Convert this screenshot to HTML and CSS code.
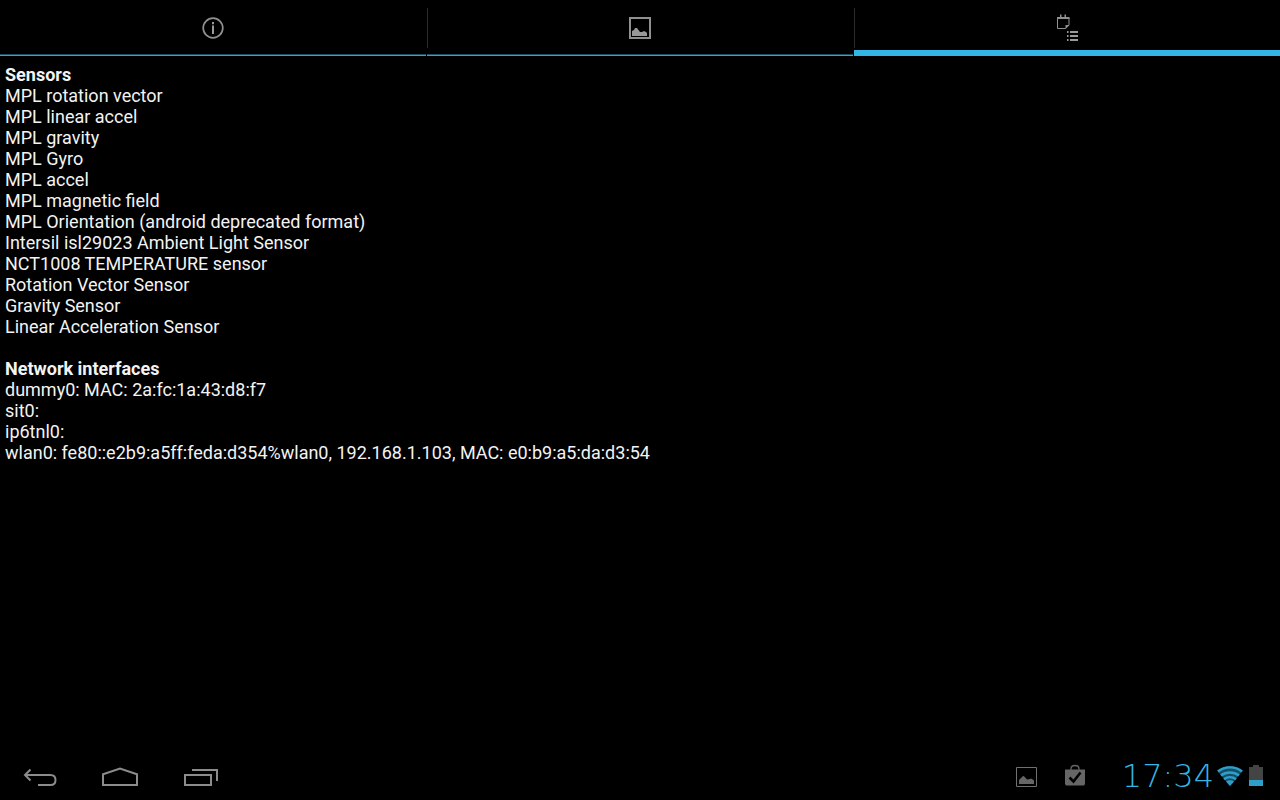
FILE: index.html
```html
<!DOCTYPE html>
<html lang="en">
<head>
<meta charset="utf-8">
<meta name="viewport" content="width=device-width, initial-scale=1">
<title>Device information</title>
<link rel="stylesheet" href="styles.css">
</head>
<body>
<div class="screen">
  <nav class="tabs" role="tablist">
    <button class="tab" type="button" role="tab" aria-selected="false" aria-label="Info">
      <svg class="icon" width="32" height="32" viewBox="0 0 32 32" fill="none">
        <circle cx="16" cy="16" r="9.800" stroke="#909090" stroke-width="1.700"/>
        <path d="M15 10h2v2.200h-2zM15 13.500h2V22h-2z" fill="#999"/>
      </svg>
    </button>
    <button class="tab" type="button" role="tab" aria-selected="false" aria-label="Pictures">
      <svg class="icon" width="32" height="32" viewBox="0 0 32 32" fill="none">
        <path d="M6 6h20v20H6z" stroke="#909090" stroke-width="2"/>
        <path d="M8 24v-5l2-1 1-2h2l1.500 2 1.500 2h2l2-1 2 1 1 1v3z" fill="#999"/>
      </svg>
    </button>
    <button class="tab" type="button" role="tab" aria-selected="true" aria-label="Details">
      <svg class="icon" width="32" height="32" viewBox="0 0 32 32" fill="none">
        <path d="M6 5h12.500v2H6zM9 2.500h1.500V5H9zM13.500 2.500H15V5h-1.500z" fill="#909090"/>
        <path d="M6.500 6v10.500h8L18 13V6" stroke="#909090"/>
        <path d="M14.500 17v-4h4z" fill="#909090"/>
        <path d="M16 19h1.500v2H16zM19 19h8v2h-8zM16 23h1.500v2H16zM19 23h8v2h-8zM16 27h1.500v2H16zM19 27h8v2h-8z" fill="#999"/>
      </svg>
    </button>
  </nav>

  <main class="content">
    <section class="group">
      <h2 class="heading">Sensors</h2>
      <ul class="list">
        <li>MPL rotation vector</li>
        <li>MPL linear accel</li>
        <li>MPL gravity</li>
        <li>MPL Gyro</li>
        <li>MPL accel</li>
        <li>MPL magnetic field</li>
        <li>MPL Orientation (android deprecated format)</li>
        <li>Intersil isl29023 Ambient Light Sensor</li>
        <li>NCT1008 TEMPERATURE sensor</li>
        <li>Rotation Vector Sensor</li>
        <li>Gravity Sensor</li>
        <li>Linear Acceleration Sensor</li>
      </ul>
    </section>
    <section class="group">
      <h2 class="heading">Network interfaces</h2>
      <ul class="list">
        <li>dummy0: MAC: 2a:fc:1a:43:d8:f7</li>
        <li>sit0:</li>
        <li>ip6tnl0:</li>
        <li>wlan0: fe80::e2b9:a5ff:feda:d354%wlan0, 192.168.1.103, MAC: e0:b9:a5:da:d3:54</li>
      </ul>
    </section>
  </main>

  <footer class="system-bar">
    <div class="nav-keys">
      <button class="key" type="button" aria-label="Back">
        <svg class="icon" width="40" height="32" viewBox="0 0 40 32" fill="none" stroke="#8c8c8c" stroke-width="2">
          <path d="M5 15h25.500c3.300 0 5 2.200 5 5s-1.700 5-5 5H18M10.500 9.500 5 15l5.500 5.500"/>
        </svg>
      </button>
      <button class="key" type="button" aria-label="Home">
        <svg class="icon" width="40" height="32" viewBox="0 0 40 32" fill="none" stroke="#8c8c8c" stroke-width="2">
          <path d="M3 25V14.200L20 8.500l17 5.700V25z"/>
        </svg>
      </button>
      <button class="key" type="button" aria-label="Recent apps">
        <svg class="icon" width="40" height="32" viewBox="0 0 40 32" fill="none" stroke="#8c8c8c" stroke-width="2">
          <path d="M5 15h26v10H5zM12 10h25v11"/>
        </svg>
      </button>
    </div>
    <div class="status">
      <button class="notice" type="button" aria-label="Screenshot saved">
        <svg class="icon" width="24" height="24" viewBox="0 0 24 24" fill="none">
          <path d="M1.500 3.500h20v19h-20z" stroke="#707070"/>
          <path d="M4 20v-4l2-2 2-2 1 .3 3 3.200 3-.5 1-.5 1 .5 2 1.500V20z" fill="#666"/>
        </svg>
      </button>
      <button class="notice" type="button" aria-label="Apps updated">
        <svg class="icon" width="24" height="24" viewBox="0 0 24 24" fill="none">
          <path d="M2 5.500h20V20l-1 1.500H3L2 20z" fill="#666"/>
          <path d="M8 6.500V5c0-2.200 1.800-3.500 4-3.500S16 2.800 16 5v1.500" stroke="#666" stroke-width="1.300"/>
          <path d="m6.500 13.500 4 4 7-9" stroke="#000" stroke-width="2.500"/>
        </svg>
      </button>
      <time class="clock" datetime="17:34">17:34</time>
      <svg class="icon" width="28" height="24" viewBox="0 0 28 24" fill="none" aria-label="Wi-Fi">
        <path d="M14 22 1 6.500C8.500.5 19.500.5 27 6.500z" fill="#164d65"/>
        <path d="M2 7.500C9 2 19 2 26 7.500M5 11.500c5-4 13-4 18 0M8 15.200c3.500-2.800 8.500-2.800 12 0" stroke="#2d9fcb" stroke-width="2.400"/>
        <path d="m14 22-4-4.500c2.300-1.600 5.700-1.600 8 0z" fill="#2d9fcb"/>
      </svg>
      <svg class="icon" width="14" height="24" viewBox="0 0 14 24" aria-label="Battery">
        <path d="M4 1h6v2h4v13H0V3h4z" fill="#444"/>
        <path d="M0 16h14v6H0z" fill="#2d9fcb"/>
      </svg>
    </div>
  </footer>
</div>
</body>
</html>
```
FILE: styles.css
```css
* {
  box-sizing: border-box;
}

body {
  margin: 0;
  background: #000;
  color: #f3f3f3;
  font-family: Roboto, "Noto Sans", sans-serif;
  font-size: 18px;
  line-height: 21px;
}

button {
  padding: 0;
  border: 0;
  background: none;
}

.icon {
  display: block;
  flex: none;
}

.screen {
  display: flex;
  flex-direction: column;
  min-height: 100vh;
}

.tabs {
  display: grid;
  grid-template-columns: repeat(3, 1fr);
  column-gap: 1px;
}

.tab {
  position: relative;
  display: flex;
  align-items: center;
  justify-content: center;
  height: 56px;
  background: linear-gradient(#184f65 50%, #33a5d1 50%) bottom / 100% 2px no-repeat;
}

.tab + .tab::before {
  content: "";
  position: absolute;
  top: 8px;
  left: 0;
  width: 1px;
  height: 40px;
  background: #2b2b2b;
}

.tab[aria-selected="true"] {
  background: linear-gradient(#33b5e5, #33b5e5) bottom / 100% 6px no-repeat;
}

.content {
  display: flex;
  flex: 1;
  flex-direction: column;
  gap: 21px;
  padding: 8px 5px;
}

.heading {
  margin: 0;
  font-size: 18px;
  font-weight: 700;
}

.list {
  margin: 0;
  padding: 0;
  list-style: none;
}

.system-bar {
  display: flex;
  align-items: center;
  justify-content: space-between;
  height: 48px;
}

.nav-keys {
  display: flex;
}

.key {
  display: flex;
  align-items: center;
  justify-content: center;
  width: 80px;
  height: 48px;
}

.status {
  display: flex;
  align-items: center;
  padding-right: 17px;
}

.notice {
  display: flex;
  align-items: center;
  justify-content: center;
  width: 48px;
  height: 48px;
}

.clock {
  min-width: 117px;
  padding-right: 2px;
  color: #33b5e5;
  font-family: "DejaVu Sans", sans-serif;
  font-size: 32px;
  font-weight: 200;
  line-height: 32px;
  text-align: right;
}

.status .clock + .icon {
  margin-right: 5px;
}
```
